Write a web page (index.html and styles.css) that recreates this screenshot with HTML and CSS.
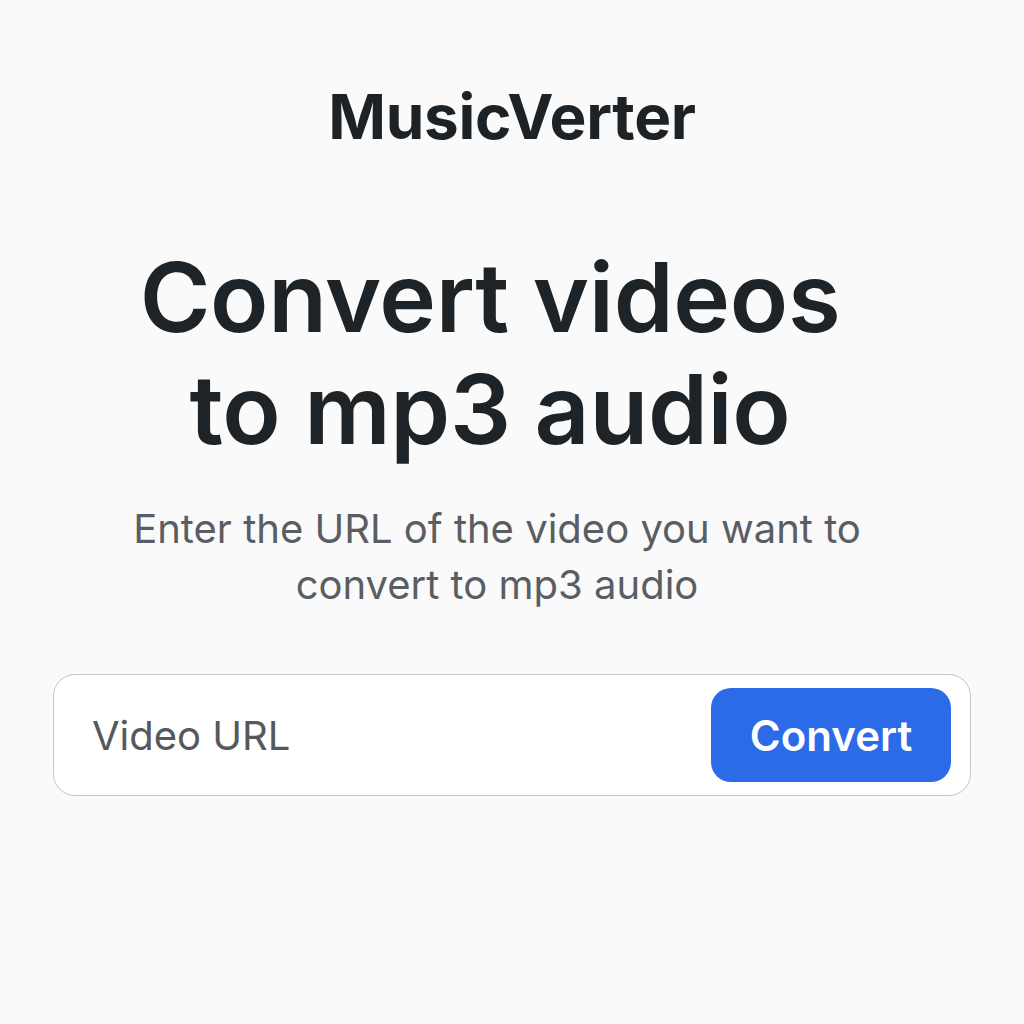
FILE: index.html
```html
<!DOCTYPE html>
<html lang="en">
<head>
<meta charset="utf-8">
<title>MusicVerter</title>
<link rel="stylesheet" href="styles.css">
</head>
<body>
<main class="page">
  <div class="brand">MusicVerter</div>
  <h1 class="headline">Convert videos<br>to mp3 audio</h1>
  <p class="lead">Enter the URL of the video you want to<br>convert to mp3 audio</p>
  <form class="convert-form">
    <input class="url-input" type="text" placeholder="Video URL">
    <button class="convert-btn" type="button">Convert</button>
  </form>
</main>
</body>
</html>
```
FILE: styles.css
```css
* { box-sizing: border-box; }
html, body { margin: 0; padding: 0; }
body {
  background: #fafafa;
  font-family: Inter, "Noto Sans", sans-serif;
  color: #1d2327;
  width: 1024px;
  height: 1024px;
}
.page {
  display: flex;
  flex-direction: column;
  align-items: center;
  padding: 80px 53px 0;
}
.brand {
  font-size: 62px;
  font-weight: 700;
  letter-spacing: -0.3px;
  line-height: 74px;
  color: #1d2226;
}
.headline {
  margin: 87px 0 0;
  padding-right: 44px;
  font-size: 96px;
  font-weight: 600;
  line-height: 112px;
  text-align: center;
  letter-spacing: -0.3px;
  color: #1d2327;
}
.lead {
  margin: 36px 0 0;
  padding-right: 30px;
  font-size: 40px;
  line-height: 56px;
  color: #5a5e63;
  text-align: center;
  font-weight: 400;
}
.convert-form {
  margin-top: 61px;
  width: 100%;
  height: 122px;
  display: flex;
  align-items: center;
  background: #ffffff;
  border: 1.5px solid #c6c6c6;
  border-radius: 22px;
  padding: 0 19px 0 38px;
}
.url-input {
  flex: 1;
  min-width: 0;
  border: none;
  outline: none;
  background: transparent;
  font-family: inherit;
  font-size: 40px;
  color: #555;
  padding: 0;
}
.url-input::placeholder { color: #56595c; }
.convert-btn {
  width: 240px;
  height: 94px;
  border: none;
  border-radius: 20px;
  background: #2b6be8;
  color: #ffffff;
  font-family: inherit;
  font-size: 42px;
  font-weight: 600;
  padding: 0;
}
```
